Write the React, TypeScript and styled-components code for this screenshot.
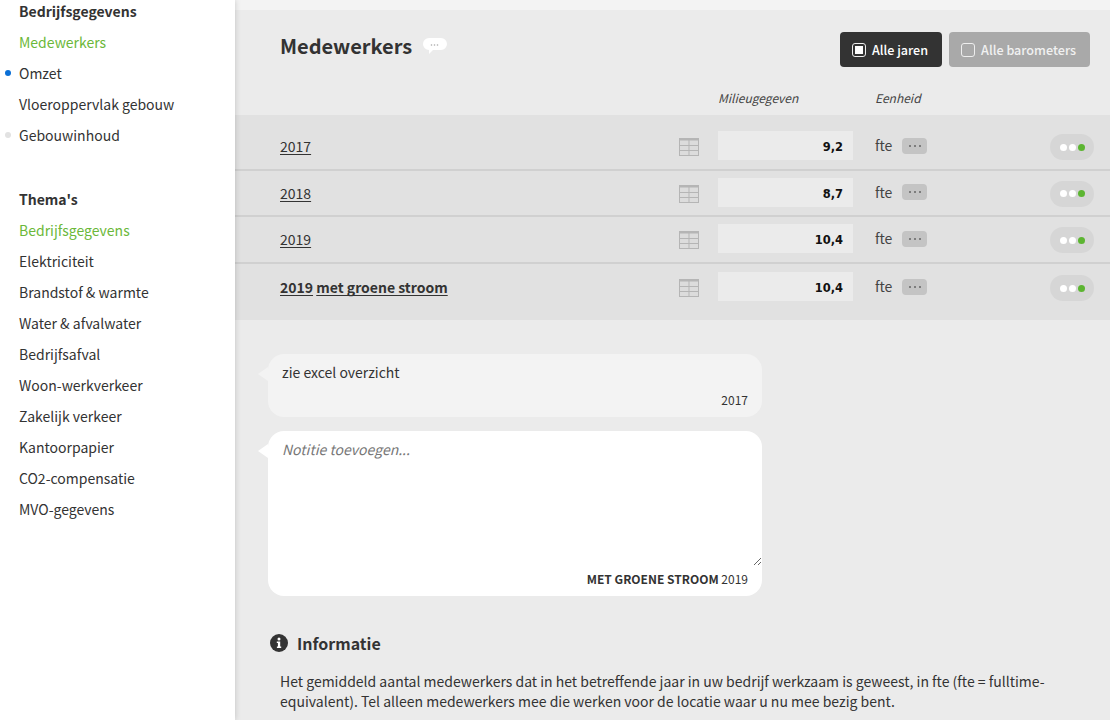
import styled, { createGlobalStyle } from "styled-components"

const GlobalStyle = createGlobalStyle`
  html, body {
    margin: 0;
    padding: 0;
    height: 720px;
    overflow: hidden;
    background: #ebebeb;
  }
  * {
    box-sizing: border-box;
  }
  body {
    font-family: "Noto Sans CJK SC", "Noto Sans", sans-serif;
    font-size: 14px;
    color: #333;
  }
`

const Page = styled.div`
  display: flex;
  width: 1110px;
  height: 720px;
  overflow: hidden;
`

const Sidebar = styled.nav`
  width: 235px;
  flex: none;
  background: #fff;
  box-shadow: 0 0 6px rgba(0, 0, 0, 0.18);
  position: relative;
  z-index: 1;
`

const NavGroup = styled.ul`
  list-style: none;
  margin: 0 0 42px;
  padding: 0 0 0 19px;
  display: flex;
  flex-direction: column;
  gap: 9px;
`

const NavItem = styled.li<{ $kind?: "head" | "active"; $dot?: string }>`
  position: relative;
  height: 22px;
  line-height: 22px;
  white-space: nowrap;
  font-weight: ${(p) => (p.$kind === "head" ? 700 : 400)};
  color: ${(p) => (p.$kind === "active" ? "#6bb83a" : "#333")};

  &::before {
    content: "";
    display: ${(p) => (p.$dot ? "block" : "none")};
    position: absolute;
    left: -14px;
    top: 8px;
    width: 6px;
    height: 6px;
    border-radius: 50%;
    background: ${(p) => p.$dot};
  }
`

const Main = styled.main`
  flex: 1;
  min-width: 0;
  border-top: 10px solid #f3f3f3;
`

const Header = styled.header`
  display: flex;
  align-items: center;
  height: 57px;
  padding: 22px 20px 0 45px;
`

const Title = styled.h1`
  margin: 0 0 8px;
  font-size: 20px;
  line-height: 30px;
  font-weight: 700;
  color: #333;
`

const TitleBubble = styled.svg`
  margin: 0 0 8px 11px;
  display: block;
`

const Toolbar = styled.div`
  margin-left: auto;
  display: flex;
  gap: 7px;
`

const ToggleButton = styled.button<{ $on?: boolean }>`
  display: flex;
  align-items: center;
  height: 35px;
  padding: 0 14px 0 12px;
  gap: 6px;
  border: 0;
  border-radius: 4px;
  font: inherit;
  font-size: 12.6px;
  font-weight: 500;
  color: ${(p) => (p.$on ? "#fff" : "#f1f1f1")};
  background: ${(p) => (p.$on ? "#333" : "#a9a9a9")};
`

const Check = styled.span<{ $on?: boolean }>`
  display: block;
  width: 14px;
  height: 14px;
  border: 1.5px solid #eee;
  border-radius: 3px;
  padding: 2px;

  &::after {
    content: "";
    display: ${(p) => (p.$on ? "block" : "none")};
    width: 100%;
    height: 100%;
    background: #fff;
  }
`

const Columns = styled.div`
  display: grid;
  grid-template-columns: 135px 1fr;
  column-gap: 22px;
  padding: 22px 0 0 483px;
  height: 48px;
  font-size: 12px;
  line-height: 18px;
  font-style: italic;
  color: #444;
`

const Rows = styled.div`
  background: #e1e1e1;
  padding: 9px 0 10px;
`

const Row = styled.div`
  display: flex;
  align-items: center;
  height: 46.6px;
  padding: 0 16px 0 45px;
  border-bottom: 2px solid #d0d0d0;

  &:last-child {
    border-bottom: 0;
  }
`

const YearLabel = styled.span<{ $strong?: boolean }>`
  width: 399px;
  flex: none;
  font-weight: ${(p) => (p.$strong ? 700 : 400)};

  u {
    text-underline-offset: 2px;
    text-decoration-skip-ink: none;
  }
`

const TableGlyph = styled.svg`
  display: block;
  margin-top: 2px;
`

const Value = styled.div`
  width: 135px;
  height: 29px;
  margin: 0 22px 1px 19px;
  padding: 3px 10px 0 0;
  background: #ebebeb;
  text-align: right;
  font-family: "DejaVu Sans", sans-serif;
  font-size: 11.5px;
  line-height: 26px;
  font-weight: 700;
  color: #111;
`

const Unit = styled.span`
  width: 27px;
  margin-bottom: 2px;
  color: #444;
`

const MoreBadge = styled.span`
  display: flex;
  align-items: center;
  justify-content: center;
  gap: 3px;
  width: 25px;
  height: 16px;
  margin-bottom: 1px;
  border-radius: 4px;
  background: #c4c4c4;
`

const Dot = styled.i<{ $color: string; $size?: number }>`
  display: block;
  width: ${(p) => p.$size ?? 2}px;
  height: ${(p) => p.$size ?? 2}px;
  border-radius: 50%;
  background: ${(p) => p.$color};
`

const Status = styled.div`
  display: flex;
  align-items: center;
  justify-content: center;
  gap: 2px;
  width: 44px;
  height: 26px;
  margin: 2px 0 0 auto;
  border-radius: 13px;
  background: #d6d6d6;
`

const Notes = styled.section`
  display: flex;
  flex-direction: column;
  gap: 14px;
  width: 494px;
  margin: 34px 0 0 33px;
`

const Note = styled.div<{ $white?: boolean }>`
  position: relative;
  padding: 7px 14px 8px;
  border-radius: 16px;
  background: ${(p) => (p.$white ? "#fff" : "#f3f3f3")};

  &::before {
    content: "";
    position: absolute;
    left: -10px;
    top: 13px;
    border-style: solid;
    border-width: 7px 10px 7px 0;
    border-color: transparent ${(p) => (p.$white ? "#fff" : "#f3f3f3")} transparent transparent;
  }
`

const NoteText = styled.p`
  margin: 0;
  line-height: 22px;
  height: 30px;
`

const NoteInput = styled.textarea`
  display: block;
  width: calc(100% + 14px);
  height: 128px;
  margin: 0 0 4px;
  padding: 0;
  border: 0;
  outline: 0;
  background: transparent;
  font: inherit;
  line-height: 22px;
  color: #333;

  &::placeholder {
    font-style: italic;
    color: #777;
    opacity: 1;
  }
`

const NoteMeta = styled.div`
  text-align: right;
  font-size: 12px;
  line-height: 18px;
  color: #333;

  b {
    font-weight: 700;
  }
`

const InfoHeading = styled.h2`
  display: flex;
  align-items: center;
  gap: 9px;
  margin: 34px 0 0 35px;
  font-size: 16px;
  line-height: 26px;
  font-weight: 700;
  color: #333;
`

const InfoText = styled.p`
  margin: 15px 40px 0 45px;
  line-height: 20px;
  color: #333;
`

const TableIcon = () => (
  <TableGlyph width="20" height="18" viewBox="0 0 20 18" fill="none" stroke="#b5b5b5">
    <rect x="0.5" y="0.5" width="19" height="17" fill="#dcdcdc" strokeWidth="1" />
    <path d="M0 1.5h20" strokeWidth="2" />
    <path d="M0 7.5h20M0 12.5h20M10 2v15" strokeWidth="1" />
  </TableGlyph>
)

const InfoIcon = () => (
  <svg width="18" height="18" viewBox="0 0 18 18">
    <circle cx="9" cy="9" r="9" fill="#333" />
    <circle cx="9" cy="4.9" r="1.5" fill="#fff" />
    <path d="M6.8 7.6h3.4v5h1v1.5H6.9v-1.5h1v-3.5H6.8z" fill="#fff" />
  </svg>
)

const themes = [
  "Elektriciteit",
  "Brandstof & warmte",
  "Water & afvalwater",
  "Bedrijfsafval",
  "Woon-werkverkeer",
  "Zakelijk verkeer",
  "Kantoorpapier",
  "CO2-compensatie",
  "MVO-gegevens",
]

const rows = [
  { year: "2017", value: "9,2" },
  { year: "2018", value: "8,7" },
  { year: "2019", value: "10,4" },
  { year: "2019", extra: "met groene stroom", value: "10,4", strong: true },
]

export default function App() {
  return (
    <Page>
      <GlobalStyle />
      <Sidebar>
        <NavGroup>
          <NavItem $kind="head">Bedrijfsgegevens</NavItem>
          <NavItem $kind="active">Medewerkers</NavItem>
          <NavItem $dot="#0a6fd6">Omzet</NavItem>
          <NavItem>Vloeroppervlak gebouw</NavItem>
          <NavItem $dot="#e2e2e2">Gebouwinhoud</NavItem>
        </NavGroup>
        <NavGroup>
          <NavItem $kind="head">Thema's</NavItem>
          <NavItem $kind="active">Bedrijfsgegevens</NavItem>
          {themes.map((t) => (
            <NavItem key={t}>{t}</NavItem>
          ))}
        </NavGroup>
      </Sidebar>
      <Main>
        <Header>
          <Title>Medewerkers</Title>
          <TitleBubble width="24" height="16" viewBox="0 0 24 16">
            <path d="M6 0h12a6 6 0 0 1 0 12H10l-4 4v-4a6 6 0 0 1 0-12z" fill="#fff" />
            <circle cx="8.5" cy="7" r="0.8" fill="#aaa" />
            <circle cx="11.5" cy="7" r="0.8" fill="#aaa" />
            <circle cx="14.5" cy="7" r="0.8" fill="#aaa" />
          </TitleBubble>
          <Toolbar>
            <ToggleButton $on>
              <Check $on />
              Alle jaren
            </ToggleButton>
            <ToggleButton>
              <Check />
              Alle barometers
            </ToggleButton>
          </Toolbar>
        </Header>
        <Columns>
          <span>Milieugegeven</span>
          <span>Eenheid</span>
        </Columns>
        <Rows>
          {rows.map((r, i) => (
            <Row key={i}>
              <YearLabel $strong={r.strong}>
                <u>{r.year}</u>
                {r.extra && " "}
                {r.extra && <u>{r.extra}</u>}
              </YearLabel>
              <TableIcon />
              <Value>{r.value}</Value>
              <Unit>fte</Unit>
              <MoreBadge>
                <Dot $color="#666" />
                <Dot $color="#666" />
                <Dot $color="#666" />
              </MoreBadge>
              <Status>
                <Dot $color="#fff" $size={7} />
                <Dot $color="#fff" $size={7} />
                <Dot $color="#5cb531" $size={7} />
              </Status>
            </Row>
          ))}
        </Rows>
        <Notes>
          <Note>
            <NoteText>zie excel overzicht</NoteText>
            <NoteMeta>2017</NoteMeta>
          </Note>
          <Note $white>
            <NoteInput placeholder="Notitie toevoegen..." />
            <NoteMeta>
              <b>MET GROENE STROOM</b> 2019
            </NoteMeta>
          </Note>
        </Notes>
        <InfoHeading>
          <InfoIcon />
          Informatie
        </InfoHeading>
        <InfoText>
          Het gemiddeld aantal medewerkers dat in het betreffende jaar in uw bedrijf werkzaam is geweest, in fte (fte =
          fulltime-equivalent). Tel alleen medewerkers mee die werken voor de locatie waar u nu mee bezig bent.
        </InfoText>
      </Main>
    </Page>
  )
}
